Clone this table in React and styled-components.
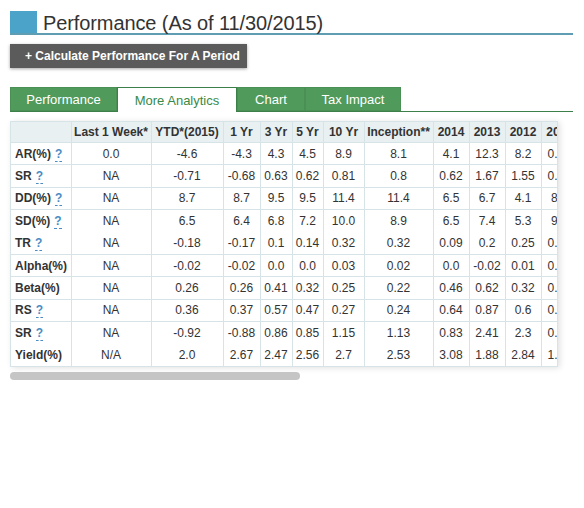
import styled, { createGlobalStyle } from 'styled-components';

const GlobalStyle = createGlobalStyle`
  body {
    margin: 0;
    background: #fff;
    font-family: "Liberation Sans", Arial, sans-serif;
    color: #333;
  }
`;

const Page = styled.div`
  width: 563px;
  padding: 11px 0 0 10px;
`;

const TitleBar = styled.div`
  display: flex;
  align-items: stretch;
  height: 22px;
  border-bottom: 2px solid #5f9db3;
`;

const TitleMark = styled.div`
  width: 27px;
  background-color: #4ba3c9;
`;

const Title = styled.h1`
  margin: 0 0 0 6px;
  font-size: 20px;
  font-weight: 400;
  line-height: 24px;
  color: #333;
  letter-spacing: -0.1px;
`;

const CalcButton = styled.button`
  display: flex;
  align-items: center;
  margin-top: 9px;
  width: 237px;
  height: 24px;
  padding: 0 0 0 15px;
  border: none;
  background-color: #5b5b5b;
  color: #fff;
  font-family: inherit;
  font-size: 12px;
  font-weight: 700;
  box-shadow: 0 1px 3px rgba(0, 0, 0, 0.35);
`;

const TabRow = styled.div`
  display: flex;
  align-items: flex-end;
  margin-top: 19px;
  border-bottom: 1px solid #3d7f48;
`;

const Tab = styled.div`
  display: flex;
  justify-content: center;
  align-items: center;
  width: ${(props) => props.w}px;
  height: ${(props) => (props.active ? '25px' : '24px')};
  margin-bottom: ${(props) => (props.active ? '-1px' : '0')};
  box-sizing: border-box;
  background-color: ${(props) => (props.active ? '#fff' : '#509a5b')};
  border: 1px solid ${(props) => (props.active ? '#3d7f48' : '#4a9055')};
  border-bottom: ${(props) => (props.active ? 'none' : '1px solid #4a9055')};
  color: ${(props) => (props.active ? '#3a8a47' : '#fff')};
  font-size: 13px;
`;

const TableBox = styled.div`
  margin-top: 9px;
  width: 548px;
  overflow: hidden;
  border: 1px solid #d6e3e7;
  box-sizing: border-box;
  box-shadow: 2px 1px 6px rgba(0, 0, 0, 0.12);
`;

const Table = styled.table`
  border-collapse: collapse;
  table-layout: fixed;
  width: 566px;
  font-size: 12px;
  color: #333;
`;

const HeadCell = styled.th`
  height: 20px;
  padding: 0;
  background-color: #e8f0f2;
  border-left: 1px solid #d6e3e7;
  border-bottom: 1px solid #d6e3e7;
  font-weight: 700;
  text-align: center;
  white-space: nowrap;
  overflow: hidden;
  &:first-child {
    border-left: none;
  }
`;

const Row = styled.tr`
  height: 22.4px;
  border-bottom: ${(props) => (props.noLine ? 'none' : '1px solid #d6e3e7')};
  &:last-child {
    border-bottom: none;
  }
`;

const LabelCell = styled.td`
  padding: 0 0 0 4px;
  font-weight: 700;
  white-space: nowrap;
`;

const Cell = styled.td`
  padding: 0;
  border-left: 1px solid #d6e3e7;
  text-align: center;
  white-space: nowrap;
  overflow: hidden;
`;

const Help = styled.span`
  margin-left: 4px;
  color: #4a8cc4;
  border-bottom: 1px dashed #4a8cc4;
  font-weight: 700;
`;

const ScrollTrack = styled.div`
  margin-top: 5px;
  width: 548px;
  height: 8px;
`;

const ScrollThumb = styled.div`
  width: 290px;
  height: 8px;
  border-radius: 4px;
  background-color: #c5c5c5;
`;

const tabs = [
  { label: 'Performance', w: 107 },
  { label: 'More Analytics', w: 120, active: true },
  { label: 'Chart', w: 68 },
  { label: 'Tax Impact', w: 96 },
];

const columns = [
  { label: '', w: 60 },
  { label: 'Last 1 Week*', w: 80 },
  { label: 'YTD*(2015)', w: 72 },
  { label: '1 Yr', w: 37 },
  { label: '3 Yr', w: 32 },
  { label: '5 Yr', w: 31 },
  { label: '10 Yr', w: 41 },
  { label: 'Inception**', w: 69 },
  { label: '2014', w: 36 },
  { label: '2013', w: 36 },
  { label: '2012', w: 36 },
  { label: '2011', w: 36 },
];

const rows = [
  { label: 'AR(%)', help: true, values: ['0.0', '-4.6', '-4.3', '4.3', '4.5', '8.9', '8.1', '4.1', '12.3', '8.2', '0.55'] },
  { label: 'SR', help: true, values: ['NA', '-0.71', '-0.68', '0.63', '0.62', '0.81', '0.8', '0.62', '1.67', '1.55', '0.04'] },
  { label: 'DD(%)', help: true, values: ['NA', '8.7', '8.7', '9.5', '9.5', '11.4', '11.4', '6.5', '6.7', '4.1', '8.3'] },
  { label: 'SD(%)', help: true, noLine: true, values: ['NA', '6.5', '6.4', '6.8', '7.2', '10.0', '8.9', '6.5', '7.4', '5.3', '9.6'] },
  { label: 'TR', help: true, values: ['NA', '-0.18', '-0.17', '0.1', '0.14', '0.32', '0.32', '0.09', '0.2', '0.25', '0.01'] },
  { label: 'Alpha(%)', values: ['NA', '-0.02', '-0.02', '0.0', '0.0', '0.03', '0.02', '0.0', '-0.02', '0.01', '0.01'] },
  { label: 'Beta(%)', values: ['NA', '0.26', '0.26', '0.41', '0.32', '0.25', '0.22', '0.46', '0.62', '0.32', '0.31'] },
  { label: 'RS', help: true, values: ['NA', '0.36', '0.37', '0.57', '0.47', '0.27', '0.24', '0.64', '0.87', '0.6', '0.38'] },
  { label: 'SR', help: true, noLine: true, values: ['NA', '-0.92', '-0.88', '0.86', '0.85', '1.15', '1.13', '0.83', '2.41', '2.3', '0.05'] },
  { label: 'Yield(%)', values: ['N/A', '2.0', '2.67', '2.47', '2.56', '2.7', '2.53', '3.08', '1.88', '2.84', '1.72'] },
];

const App = () => (
  <Page>
    <GlobalStyle />
    <TitleBar>
      <TitleMark />
      <Title>Performance (As of 11/30/2015)</Title>
    </TitleBar>
    <CalcButton>+ Calculate Performance For A Period</CalcButton>
    <TabRow>
      {tabs.map((tab) => (
        <Tab key={tab.label} w={tab.w} active={tab.active}>
          {tab.label}
        </Tab>
      ))}
    </TabRow>
    <TableBox>
      <Table>
        <colgroup>
          {columns.map((col, i) => (
            <col key={i} style={{ width: col.w }} />
          ))}
        </colgroup>
        <thead>
          <tr>
            {columns.map((col, i) => (
              <HeadCell key={i}>{col.label}</HeadCell>
            ))}
          </tr>
        </thead>
        <tbody>
          {rows.map((row, i) => (
            <Row key={i} noLine={row.noLine}>
              <LabelCell>
                {row.label}
                {row.help && <Help>?</Help>}
              </LabelCell>
              {row.values.map((v, j) => (
                <Cell key={j}>{v}</Cell>
              ))}
            </Row>
          ))}
        </tbody>
      </Table>
    </TableBox>
    <ScrollTrack>
      <ScrollThumb />
    </ScrollTrack>
  </Page>
);

export default App;
